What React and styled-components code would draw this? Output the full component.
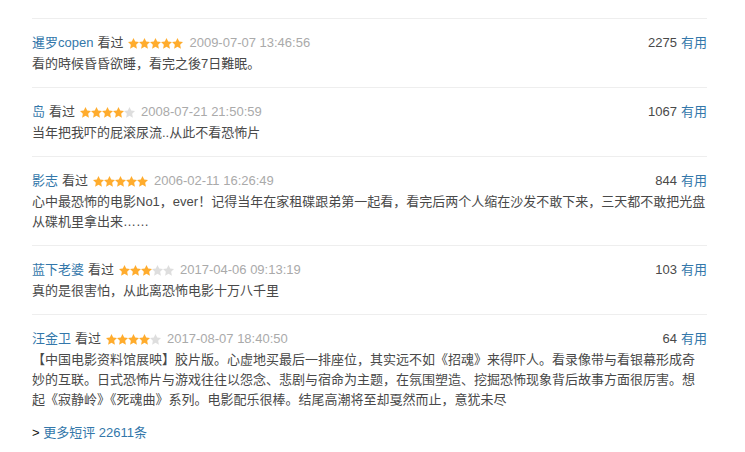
import React from 'react'
import styled, { createGlobalStyle } from 'styled-components'

const GlobalStyle = createGlobalStyle`
  html, body {
    margin: 0;
    padding: 0;
    background: #fff;
  }
  body {
    font-family: "Liberation Sans", Arial, "Noto Sans CJK SC", sans-serif;
    font-size: 13px;
    color: #494949;
  }
`

const comments = [
  {
    user: '暹罗copen',
    rating: 5,
    time: '2009-07-07 13:46:56',
    votes: 2275,
    text: '看的時候昏昏欲睡，看完之後7日難眠。',
  },
  {
    user: '岛',
    rating: 4,
    time: '2008-07-21 21:50:59',
    votes: 1067,
    text: '当年把我吓的屁滚尿流..从此不看恐怖片',
  },
  {
    user: '影志',
    rating: 5,
    time: '2006-02-11 16:26:49',
    votes: 844,
    text: '心中最恐怖的电影No1，ever！记得当年在家租碟跟弟第一起看，看完后两个人缩在沙发不敢下来，三天都不敢把光盘从碟机里拿出来……',
  },
  {
    user: '蓝下老婆',
    rating: 3,
    time: '2017-04-06 09:13:19',
    votes: 103,
    text: '真的是很害怕，从此离恐怖电影十万八千里',
  },
  {
    user: '汪金卫',
    rating: 4,
    time: '2017-08-07 18:40:50',
    votes: 64,
    text: '【中国电影资料馆展映】胶片版。心虚地买最后一排座位，其实远不如《招魂》来得吓人。看录像带与看银幕形成奇妙的互联。日式恐怖片与游戏往往以怨念、悲剧与宿命为主题，在氛围塑造、挖掘恐怖现象背后故事方面很厉害。想起《寂静岭》《死魂曲》系列。电影配乐很棒。结尾高潮将至却戛然而止，意犹未尽',
  },
]

// fat five-point star, 11px cell
const STAR = 'M5.5 0 L7.2 3.55 L11 4 L8.15 6.65 L8.9 10.8 L5.5 8.8 L2.1 10.8 L2.85 6.65 L0 4 L3.8 3.55 Z'

const Stars = ({ value }) => (
  <StarBox width="55" height="11" viewBox="0 0 55 11">
    {[0, 1, 2, 3, 4].map(i => (
      <path
        key={i}
        d={STAR}
        transform={`translate(${i * 11} 0)`}
        fill={i < value ? '#ffac2d' : '#dedede'}
      />
    ))}
  </StarBox>
)

const App = () => {
  return (
    <>
      <GlobalStyle />
      <Wrapper>
        <List>
          {comments.map((c, i) => (
            <Item key={i} last={i === comments.length - 1}>
              <Head>
                <Info>
                  <UserLink href="#">{c.user}</UserLink>
                  <Watched>看过</Watched>
                  <Stars value={c.rating} />
                  <Time>{c.time}</Time>
                </Info>
                <Votes>
                  <span>{c.votes}</span>
                  <VoteLink href="#">有用</VoteLink>
                </Votes>
              </Head>
              <Content>{c.text}</Content>
            </Item>
          ))}
        </List>
        <More>
          &gt; <a href="#">更多短评 22611条</a>
        </More>
      </Wrapper>
    </>
  )
}

export default App

const Wrapper = styled.div`
  padding: 18px 0 0 32px;
  width: 675px;
`

const List = styled.div`
  border-top: 1px solid #eee;
`

const Item = styled.div`
  padding: 14px 0 13px;
  border-bottom: ${p => (p.last ? 'none' : '1px solid #eee')};
`

const Head = styled.div`
  display: flex;
  justify-content: space-between;
  align-items: center;
  height: 20px;
  line-height: 20px;
`

const Info = styled.div`
  display: flex;
  align-items: center;
`

const UserLink = styled.a`
  color: #37a;
  text-decoration: none;
`

const Watched = styled.span`
  margin-left: 4px;
  color: #494949;
`

const StarBox = styled.svg`
  margin-left: 5px;
  display: block;
`

const Time = styled.span`
  margin-left: 6px;
  color: #aaa;
`

const Votes = styled.div`
  color: #494949;
  span {
    margin-right: 4px;
  }
`

const VoteLink = styled.a`
  color: #37a;
  text-decoration: none;
`

const Content = styled.p`
  margin: 1px 0 0;
  line-height: 20px;
  word-break: break-all;
`

const More = styled.div`
  margin-top: 0;
  line-height: 20px;
  color: #111;
  a {
    color: #37a;
    text-decoration: none;
  }
`
